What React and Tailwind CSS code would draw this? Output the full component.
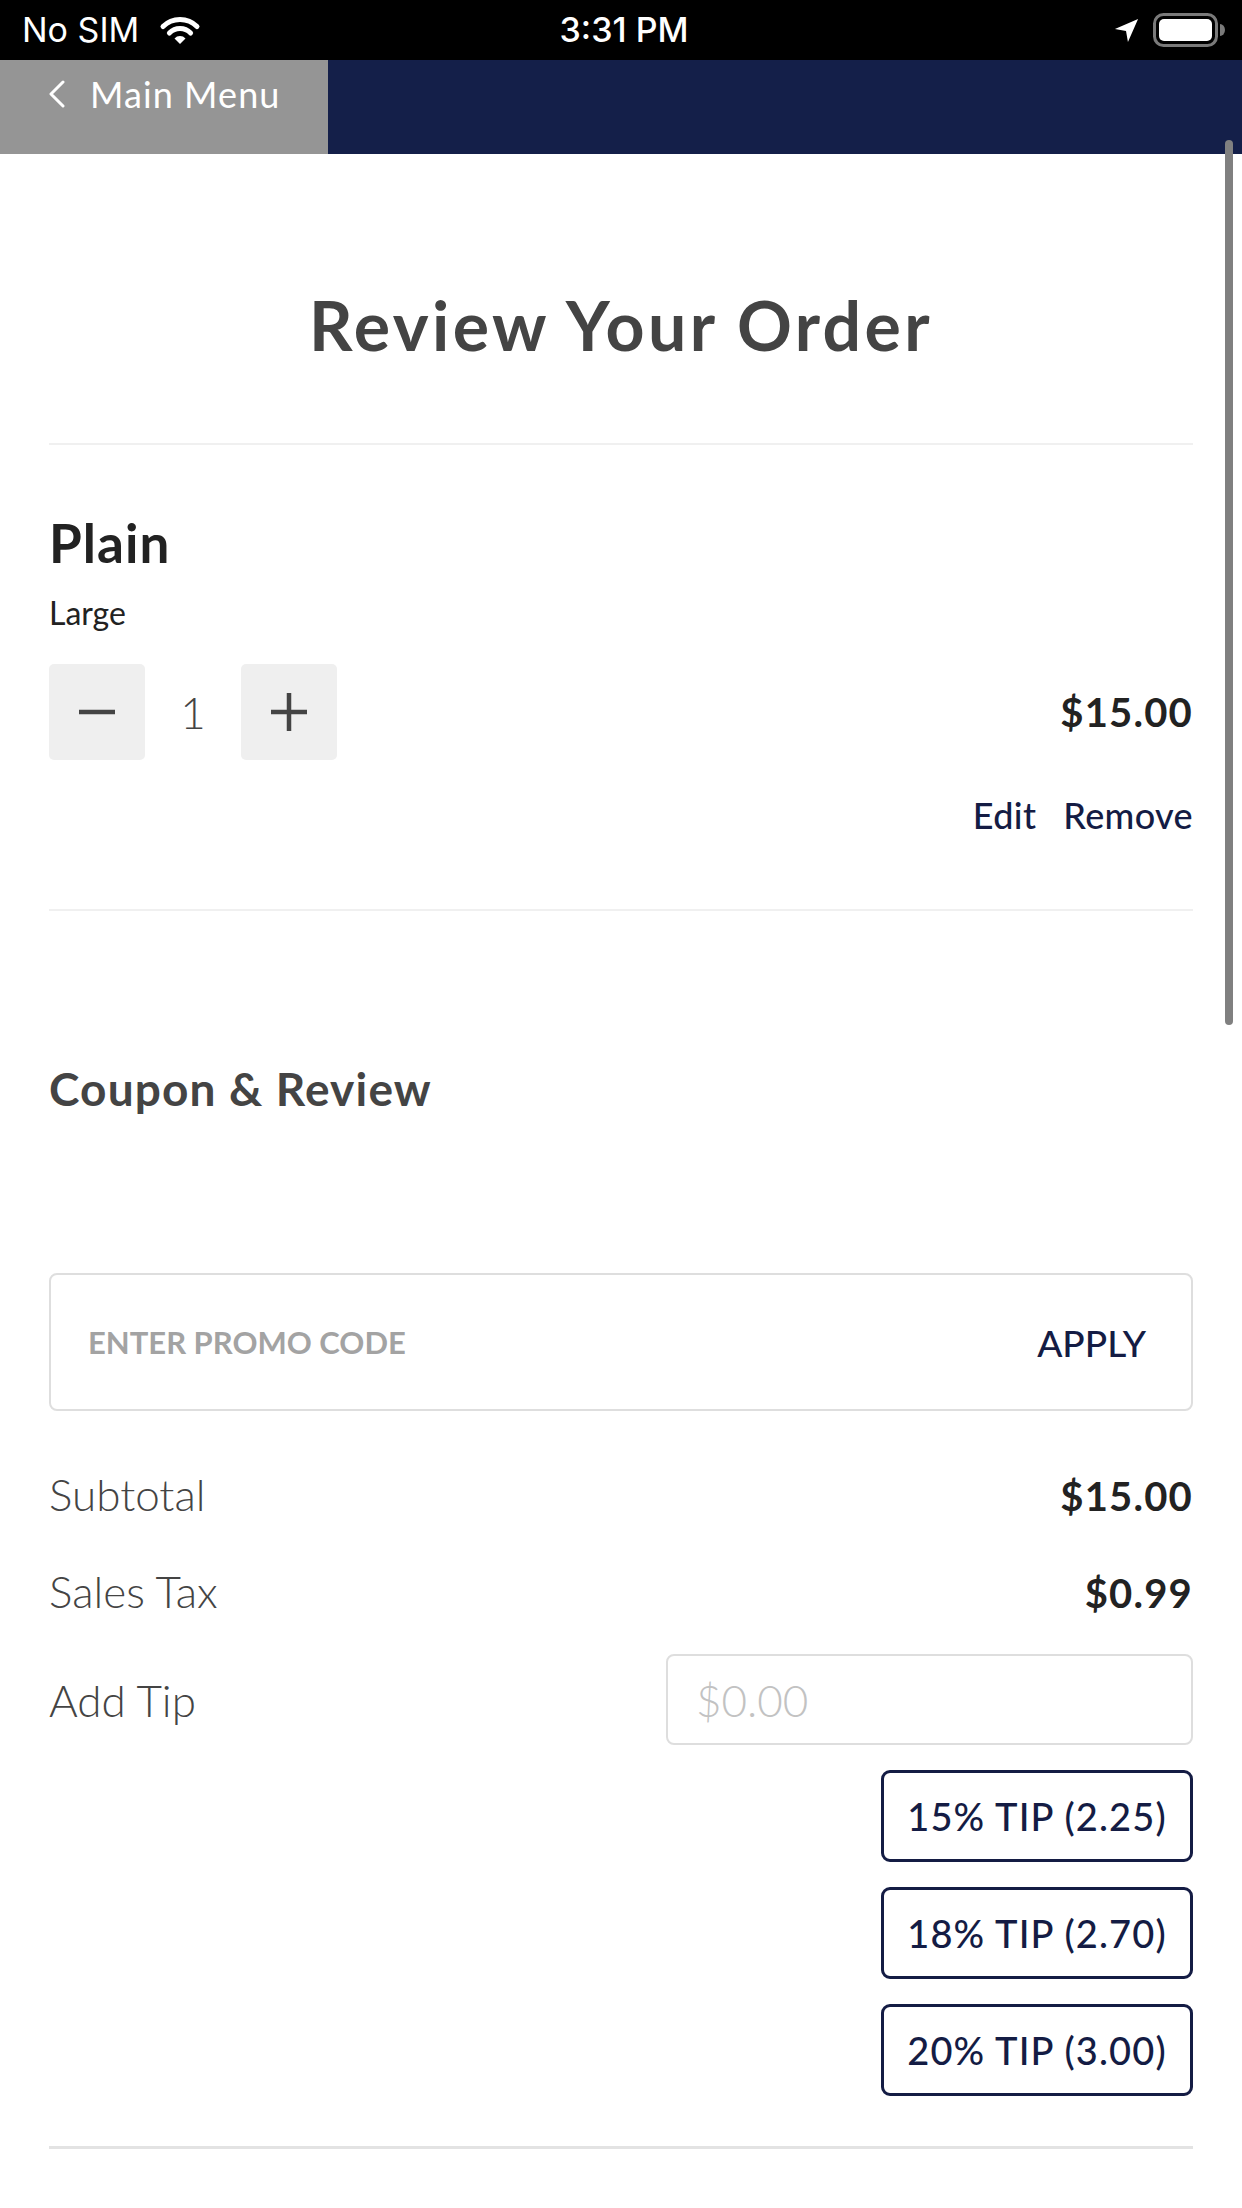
function StatusBar() {
  return (
    <div className="grid h-[60px] grid-cols-[1fr_auto_1fr] items-center bg-black pl-[22px] pr-[16px] font-['Inter','Liberation_Sans',sans-serif] text-white">
      <div className="flex items-center gap-[19px] justify-self-start">
        <span className="text-[34px] leading-none">No SIM</span>
        <svg width="44" height="32" viewBox="0 0 44 32" fill="none">
          <path d="M5 12.5 A24 24 0 0 1 39 12.5" stroke="white" strokeWidth="5" strokeLinecap="round" />
          <path d="M11.4 19 A15 15 0 0 1 32.6 19" stroke="white" strokeWidth="5" strokeLinecap="round" />
          <path d="M22 30 L16.5 24.5 A7.5 7.5 0 0 1 27.5 24.5 Z" fill="white" />
        </svg>
      </div>
      <span className="text-[34px] font-medium leading-none">3:31 PM</span>
      <div className="flex items-center gap-[13px] justify-self-end">
        <svg width="27" height="27" viewBox="0 0 28 28">
          <polygon points="26,2 2,12.5 13.5,14.5 15.5,26" fill="white" />
        </svg>
        <svg width="73" height="34" viewBox="0 0 73 34">
          <rect x="1.5" y="1.5" width="62" height="31" rx="9" fill="none" stroke="#7a7a7a" strokeWidth="3" />
          <rect x="6" y="6" width="53" height="22" rx="5" fill="white" />
          <path d="M67 11 A5 6 0 0 1 67 23 Z" fill="#7a7a7a" />
        </svg>
      </div>
    </div>
  );
}

function NavBar() {
  return (
    <div className="flex h-[94px]">
      <div className="flex w-[328px] items-start bg-[#959595] pl-[48px] pt-[16px]">
        <div className="flex items-center gap-[24px]">
          <svg width="18" height="28" viewBox="0 0 18 28" fill="none">
            <polyline points="15,2 3,14 15,26" stroke="white" strokeWidth="3" strokeLinecap="round" strokeLinejoin="round" />
          </svg>
          <span className="text-[36px] leading-none tracking-[0.03em] text-white">Main Menu</span>
        </div>
      </div>
      <div className="flex-1 bg-[#141f49]"></div>
    </div>
  );
}

function TipButton({ label }) {
  return (
    <button className="flex h-[92px] w-[312px] items-center justify-center rounded-[9px] border-[3px] border-[#141c44] text-[38px] font-medium leading-none tracking-[0.03em] text-[#141c44]">
      {label}
    </button>
  );
}

export default function App() {
  return (
    <div className="relative min-h-[2208px] w-[1242px] overflow-hidden bg-white font-['Lato','Open_Sans',sans-serif]">
      <StatusBar />
      <NavBar />

      {/* scroll indicator */}
      <div className="absolute right-[9px] top-[140px] h-[885px] w-[8px] rounded-full bg-[#808080]"></div>

      <main className="px-[49px]">
        <h1 className="mt-[137px] text-center text-[68px] font-bold leading-none tracking-[0.05em] text-[#444]">
          Review Your Order
        </h1>
        <div className="mt-[84px] h-[2px] bg-[#f0f0f0]"></div>

        {/* Order item */}
        <h2 className="mt-[71px] text-[53px] font-bold leading-none tracking-[0.02em] text-[#222]">Plain</h2>
        <p className="mt-[28px] text-[32px] leading-none text-[#222]">Large</p>
        <div className="mt-[35px] flex items-center justify-between">
          <div className="flex items-center">
            <button className="flex h-[96px] w-[96px] items-center justify-center rounded-[5px] bg-[#efefef]">
              <svg width="36" height="6" viewBox="0 0 36 6">
                <rect x="0" y="0.75" width="36" height="4.5" fill="#444" />
              </svg>
            </button>
            <span className="w-[96px] text-center text-[44px] font-light leading-none text-[#444]">1</span>
            <button className="flex h-[96px] w-[96px] items-center justify-center rounded-[5px] bg-[#efefef]">
              <svg width="36" height="38" viewBox="0 0 36 38">
                <rect x="0" y="16.75" width="36" height="4.5" fill="#444" />
                <rect x="15.75" y="0" width="4.5" height="38" fill="#444" />
              </svg>
            </button>
          </div>
          <span className="text-[40px] font-bold leading-none tracking-[0.03em] text-[#222]">$15.00</span>
        </div>
        <div className="mt-[37px] flex justify-end gap-[27px] text-[36px] font-medium leading-none tracking-[0.01em] text-[#141c44]">
          <span>Edit</span>
          <span>Remove</span>
        </div>
        <div className="mt-[76px] h-[2px] bg-[#f0f0f0]"></div>

        {/* Coupon */}
        <h2 className="mt-[155px] text-[46px] font-bold leading-none tracking-[0.025em] text-[#444]">Coupon &amp; Review</h2>
        <div className="mt-[161px] flex h-[138px] items-center justify-between rounded-[8px] border-2 border-[#dedede] pl-[37px] pr-[45px]">
          <span className="text-[31px] font-bold leading-none text-[#a3a3a3]">ENTER PROMO CODE</span>
          <span className="text-[37px] font-medium leading-none text-[#141c44]">APPLY</span>
        </div>

        {/* Totals */}
        <div className="mt-[61px] flex items-baseline justify-between">
          <span className="text-[44px] font-light leading-none text-[#444]">Subtotal</span>
          <span className="text-[40px] font-bold leading-none tracking-[0.03em] text-[#222]">$15.00</span>
        </div>
        <div className="mt-[53px] flex items-baseline justify-between">
          <span className="text-[44px] font-light leading-none text-[#444]">Sales Tax</span>
          <span className="text-[40px] font-bold leading-none tracking-[0.03em] text-[#222]">$0.99</span>
        </div>
        <div className="mt-[41px] flex items-center justify-between">
          <span className="text-[44px] font-light leading-none text-[#444]">Add Tip</span>
          <input
            type="text"
            placeholder="$0.00"
            className="h-[91px] w-[527px] rounded-[8px] border-2 border-[#dedede] pl-[28px] text-[44px] font-light text-[#444] outline-none placeholder:text-[#c2c2c2]"
          />
        </div>
        <div className="mt-[25px] flex flex-col items-end gap-[25px]">
          <TipButton label="15% TIP (2.25)" />
          <TipButton label="18% TIP (2.70)" />
          <TipButton label="20% TIP (3.00)" />
        </div>
        <div className="mt-[50px] h-[3px] bg-[#e3e3e3]"></div>
      </main>
    </div>
  );
}
